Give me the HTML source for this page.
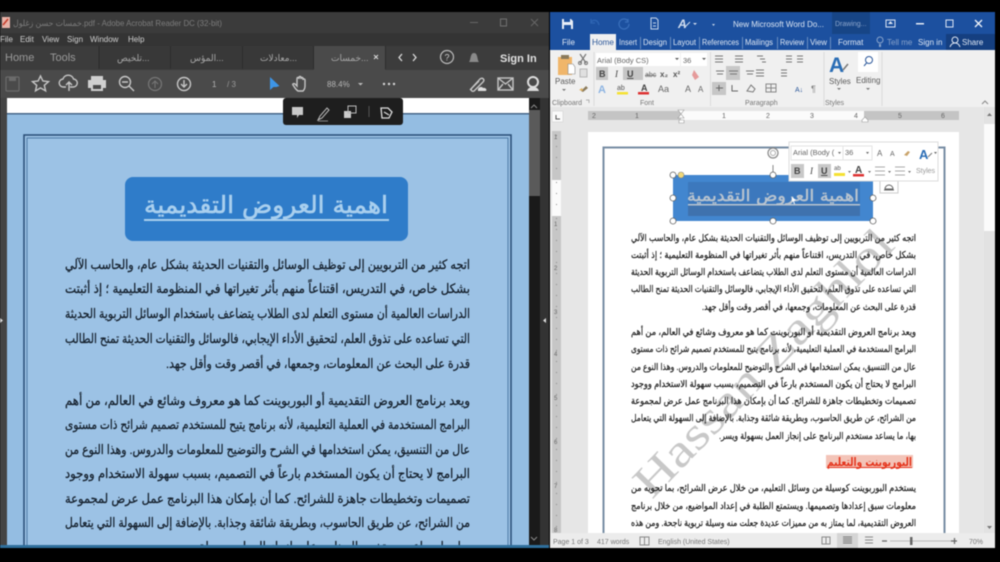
<!DOCTYPE html>
<html lang="en"><head><meta charset="utf-8"><title>Screen</title>
<style>
html,body{margin:0;padding:0;background:#000;width:1000px;height:562px;overflow:hidden}
svg{display:block;filter:blur(.4px)}
text{font-family:"Liberation Sans","DejaVu Sans",sans-serif}
.ar{font-family:"DejaVu Sans","Liberation Sans",sans-serif;direction:rtl}
.l{font-size:13px;fill:#16222f;stroke:#16222f;stroke-width:.3px}
.w{font-size:9.5px;fill:#1c1c1c;stroke:#1c1c1c;stroke-width:.22px}
.rb{font-size:8px;fill:#5a5a5a}
.tb{font-size:8px;fill:#dde6f3}
.ic{fill:none;stroke:#c6c6c6;stroke-width:1.4}
.ir{fill:none;stroke:#777;stroke-width:1}
.h{fill:#fff;stroke:#666;stroke-width:.8}
</style></head><body>
<svg width="1000" height="562" viewBox="0 0 1000 562" xmlns="http://www.w3.org/2000/svg">
<defs><clipPath id="cl"><rect x="7" y="98" width="522" height="447"/></clipPath>
<clipPath id="cr"><rect x="561" y="125" width="422" height="408"/></clipPath></defs>
<rect width="1000" height="562" fill="#000"/>

<!-- ACROBAT -->
<rect x="0" y="12" width="549" height="21" fill="#3b3b3b"/>
<rect x="2" y="17" width="8" height="11" fill="#e9b3a8"/><path d="M3 25l5-6" stroke="#c63a28" stroke-width="1.5"/>
<text x="13" y="26" font-size="8.5" fill="#7c7c7c" textLength="209" lengthAdjust="spacingAndGlyphs">خمسات حسن زغلول.pdf - Adobe Acrobat Reader DC (32-bit)</text>
<rect x="470" y="22" width="8" height="1" fill="#666"/><rect x="500.500" y="19" width="6" height="7" fill="none" stroke="#707070"/>
<path d="M531 19l7 7m0-7l-7 7" stroke="#666"/>
<rect x="0" y="33" width="549" height="13" fill="#343434"/>
<g font-size="8" fill="#cfcfcf"><text x="0" y="42">File</text><text x="20" y="42">Edit</text><text x="42" y="42">View</text><text x="67" y="42">Sign</text><text x="90" y="42">Window</text><text x="128" y="42">Help</text></g>
<rect x="0" y="46" width="549" height="24" fill="#3c3c3c"/>
<rect x="99" y="46" width="71" height="23" fill="#383838"/><rect x="171" y="46" width="71" height="23" fill="#383838"/><rect x="243" y="46" width="70" height="23" fill="#383838"/>
<rect x="314" y="46" width="71" height="25" fill="#4a4a4a"/>
<path d="M99 46v23M170.500 46v23M242.500 46v23M313.500 46v23M385.500 46v23" stroke="#2c2c2c"/>
<text x="5" y="61" font-size="11" fill="#9a9a9a">Home</text><text x="50" y="61" font-size="11" fill="#9a9a9a">Tools</text>
<g font-size="9" fill="#a8a8a8"><text x="117" y="61">تلخيص...</text><text x="190" y="61">المؤس...</text><text x="260" y="61">معادلات...</text><text x="331" y="61">خمسات...</text></g>
<path d="M374 55l4 4m0-4l-4 4" stroke="#ddd"/>
<path d="M402 54l-3 3.500 3 3.500M413 54l3 3.500-3 3.500" fill="none" stroke="#ddd" stroke-width="1.300"/>
<circle cx="447" cy="57" r="6.500" fill="none" stroke="#bbb" stroke-width="1.200"/><text x="444.500" y="60.500" font-size="9" fill="#ccc">?</text>
<path d="M469 62c2-2 1-9 5-9s3 7 5 9z" fill="#8a8a8a"/>
<text x="500" y="62" font-size="11" font-weight="bold" fill="#e2e2e2">Sign In</text>

<rect x="0" y="70" width="549" height="28" fill="#4a4a4a"/>
<rect x="6" y="77" width="13" height="14" rx="1" fill="none" stroke="#6b6b6b" stroke-width="1.200"/><rect x="9" y="77" width="7" height="4" fill="#6b6b6b"/>
<path class="ic" d="M40.500 76l2.400 5 5.600.6-4.200 3.700 1.300 5.500-5.100-2.900-5 2.900 1.200-5.500-4.200-3.700 5.600-.6z"/>
<path class="ic" d="M66 87h-2.500a4 4 0 0 1-.5-8 5.500 5.500 0 0 1 10.500 0 4 4 0 0 1-.5 8H70M69 91v-9m-3 3l3-3 3 3"/>
<path d="M91 80v-4h12v4h3v8h-3v3H91v-3h-3v-8z" fill="#d0d0d0"/><rect x="93" y="85" width="8" height="4" fill="#4a4a4a"/>
<circle cx="125" cy="82" r="5.500" class="ic"/><path class="ic" d="M129 86l5 5M122 82h6"/>
<circle cx="155" cy="84" r="6.500" fill="none" stroke="#777" stroke-width="1.200"/><path d="M155 88v-7m-3 3l3-3 3 3" fill="none" stroke="#777"/>
<circle cx="184" cy="84" r="6.500" class="ic"/><path class="ic" d="M184 80v7m-3-3l3 3 3-3"/>
<text x="212" y="87" font-size="8" fill="#b5b5b5">1</text><text x="227" y="87" font-size="8" fill="#999">/ 3</text>
<path d="M270 77v13l3.500-3 3 0 3-1z" fill="#3e95e6"/>
<path class="ic" d="M298 91c-3-2-4-5-5-6s1-2 2-1l2 2v-7c0-2 2-2 2 0v-1c0-2 2-2 2 0v1c0-2 2-2 2 0v1c0-2 2-1 2 0v6c0 3-1 4-2 5z"/>
<text x="327" y="87" font-size="8" fill="#b5b5b5">88.4%</text><path d="M358 83h5l-2.500 2.500z" fill="#bbb"/>
<g fill="#d6d6d6"><circle cx="384" cy="84" r="1.200"/><circle cx="389" cy="84" r="1.200"/><circle cx="394" cy="84" r="1.200"/></g>
<path class="ic" d="M470 90l10-11c3-2 5 1 3 3l-9 9c-2 1-4-1-2-3l7-7"/><path d="M478 91c-1-4 4-5 5-3 3-1 5 3 2 3z" fill="#ddd"/>
<rect x="498" y="78" width="15" height="12" class="ic"/><path class="ic" d="M498 78l7.500 6 7.500-6M498 90l5-6M513 90l-5-6"/>
<circle cx="533" cy="82" r="5" fill="none" stroke="#ddd" stroke-width="2"/><path d="M527 91c1-3 3-4 6-4s5 1 6 4z" fill="#ddd"/>

<rect x="0" y="98" width="7" height="447" fill="#444"/>
<rect x="529" y="98" width="20" height="447" fill="#333"/>
<rect x="529" y="98" width="11" height="447" fill="#1a1a1a"/>
<rect x="529" y="110" width="11" height="86" fill="#5a5a5a"/>
<path d="M531 108l3-3 3 3M531 537l3 3 3-3" fill="none" stroke="#888"/>
<rect x="7" y="98" width="522" height="15" fill="#fff"/>
<rect x="7" y="113" width="522" height="432" fill="#94bde2"/>
<rect x="7" y="113" width="522" height="1.500" fill="#46678a"/>
<g clip-path="url(#cl)">
<rect x="24" y="135" width="487" height="430" fill="#9cc2e5" stroke="#274b74" stroke-width="1.500"/>
<rect x="27" y="138" width="481" height="430" fill="none" stroke="#4d7aa6" stroke-width="1"/>
<rect x="125" y="177" width="283" height="64" rx="8" fill="#2f7cc9"/>
<text class="ar" x="388" y="213" font-size="24" fill="#a9cfee" stroke="#a9cfee" stroke-width=".6" textLength="244" lengthAdjust="spacingAndGlyphs">اهمية العروض التقديمية</text>
<rect x="144" y="219" width="245" height="2" fill="#a9cfee"/>
<g class="ar l">
<text x="470" y="269" textLength="405" lengthAdjust="spacingAndGlyphs">اتجه كثير من التربويين إلى توظيف الوسائل والتقنيات الحديثة بشكل عام، والحاسب الآلي</text>
<text x="470" y="293" textLength="405" lengthAdjust="spacingAndGlyphs">بشكل خاص، في التدريس، اقتناعاً منهم بأثر تغيراتها في المنظومة التعليمية ؛ إذ أثبتت</text>
<text x="470" y="318" textLength="405" lengthAdjust="spacingAndGlyphs">الدراسات العالمية أن مستوى التعلم لدى الطلاب يتضاعف باستخدام الوسائل التربوية الحديثة</text>
<text x="470" y="343" textLength="405" lengthAdjust="spacingAndGlyphs">التي تساعده على تذوق العلم، لتحقيق الأداء الإيجابي، فالوسائل والتقنيات الحديثة تمنح الطالب</text>
<text x="470" y="368" textLength="304" lengthAdjust="spacingAndGlyphs">قدرة على البحث عن المعلومات، وجمعها، في أقصر وقت وأقل جهد.</text>
<text x="470" y="405" textLength="405" lengthAdjust="spacingAndGlyphs">ويعد برنامج العروض التقديمية أو البوربوينت كما هو معروف وشائع في العالم، من أهم</text>
<text x="470" y="429" textLength="405" lengthAdjust="spacingAndGlyphs">البرامج المستخدمة في العملية التعليمية، لأنه برنامج يتيح للمستخدم تصميم شرائح ذات مستوى</text>
<text x="470" y="454" textLength="405" lengthAdjust="spacingAndGlyphs">عال من التنسيق، يمكن استخدامها في الشرح والتوضيح للمعلومات والدروس. وهذا النوع من</text>
<text x="470" y="478" textLength="405" lengthAdjust="spacingAndGlyphs">البرامج لا يحتاج أن يكون المستخدم بارعاً في التصميم، بسبب سهولة الاستخدام ووجود</text>
<text x="470" y="503" textLength="405" lengthAdjust="spacingAndGlyphs">تصميمات وتخطيطات جاهزة للشرائح. كما أن بإمكان هذا البرنامج عمل عرض لمجموعة</text>
<text x="470" y="527" textLength="405" lengthAdjust="spacingAndGlyphs">من الشرائح، عن طريق الحاسوب، وبطريقة شائقة وجذابة. بالإضافة إلى السهولة التي يتعامل</text>
<text x="470" y="551" textLength="304" lengthAdjust="spacingAndGlyphs">بها، ما يساعد مستخدم البرنامج على إنجاز العمل بسهولة ويسر.</text>
</g>
</g>
<rect x="0" y="545" width="549" height="3" fill="#2f6f9c"/>

<rect x="283" y="98" width="120" height="27" rx="3" fill="#1e1e1e"/>
<path d="M292 107h11v8h-4l-2 3v-3h-5z" fill="#c9c9c9"/>
<path d="M318 120l2-4 7-8 2 2-7 8z" fill="none" stroke="#bbb"/><path d="M318 121h10" stroke="#888"/>
<rect x="344" y="111" width="7" height="7" fill="#ccc"/><rect x="348" y="106" width="8" height="7" fill="none" stroke="#bbb"/>
<rect x="368.500" y="106" width="1" height="11" fill="#555"/>
<path d="M381 108h7l4 4-3 6h-7z" fill="none" stroke="#ddd" stroke-width="1.300"/><path d="M384 112l5 3" stroke="#ddd" stroke-width="1.300"/>
<path d="M0 318l3 2.500-3 2.500zM546 318l-3 2.500 3 2.500z" fill="#ddd"/>

<!-- WORD -->
<rect x="550" y="12" width="445" height="536" fill="#e6e6e6"/>
<rect x="550" y="12" width="445" height="38" fill="#1c509f"/>
<rect x="832" y="12" width="38" height="22" fill="#174586"/>
<rect x="946" y="34" width="49" height="16" fill="#153f80"/>
<path d="M562 19h9l2 2v8h-11z" fill="#e8eef7"/><rect x="564" y="25" width="7" height="4" fill="#1c509f"/><rect x="564" y="19" width="6" height="3" fill="#1c509f"/>
<path d="M591 22c3-3 7-2 8 3M591 19v4h4" fill="none" stroke="#2f66b4" stroke-width="1.200"/>
<path d="M628 21a5 5 0 1 0 1 3M628 19v3h-3" fill="none" stroke="#3a70bc" stroke-width="1.200"/>
<path d="M651 18h5l2 2v9h-7zM653 23h3M653 26h3" fill="none" stroke="#c8d6ea"/>
<text x="678" y="28" font-size="12" font-weight="bold" font-style="italic" fill="#d5e0f0">A</text><path d="M684 28l6-6" stroke="#d5e0f0"/><path d="M693 23h4l-2 2z" fill="#d5e0f0"/>
<path d="M712 22h3M712 24h3l-1.500 2z" fill="#c8d6ea"/>
<text x="733" y="27" font-size="8.500" fill="#dbe5f3" textLength="91" lengthAdjust="spacingAndGlyphs">New Microsoft Word Do...</text>
<text x="835" y="26" font-size="7" fill="#8ea7cd">Drawing...</text>
<rect x="886" y="20" width="9" height="7" fill="none" stroke="#dbe5f3"/><path d="M888 24l2.500-3 2.500 3z" fill="#dbe5f3"/>
<rect x="916" y="23" width="8" height="1.500" fill="#e6edf7"/>
<rect x="946" y="20" width="7" height="7" fill="none" stroke="#dbe5f3"/>
<path d="M975 20l7 7m0-7l-7 7" stroke="#f0f4fa" stroke-width="1.300"/>
<rect x="590" y="34" width="26" height="16" fill="#f0f0f0"/>
<g class="tb">
<text x="562" y="45" style="fill:#e1e9f5">File</text><text x="592" y="45" style="fill:#2b579a" textLength="22" lengthAdjust="spacingAndGlyphs">Home</text>
<text x="619" y="45" textLength="18" lengthAdjust="spacingAndGlyphs">Insert</text><text x="643" y="45" textLength="24" lengthAdjust="spacingAndGlyphs">Design</text><text x="673" y="45" textLength="23" lengthAdjust="spacingAndGlyphs">Layout</text><text x="702" y="45" textLength="37" lengthAdjust="spacingAndGlyphs">References</text><text x="745" y="45" textLength="28" lengthAdjust="spacingAndGlyphs">Mailings</text><text x="780" y="45" textLength="24" lengthAdjust="spacingAndGlyphs">Review</text><text x="810" y="45" textLength="17" lengthAdjust="spacingAndGlyphs">View</text><text x="838" y="45">Format</text>
<text x="887" y="45" style="fill:#88a3cb">Tell me</text><text x="918" y="45">Sign in</text><text x="962" y="45">Share</text></g>
<path d="M640.500 37v12M670.500 37v12M699.500 37v12M742.500 37v12M777.500 37v12M807.500 37v12M830.500 37v12" stroke="#7d9ecb" stroke-width=".8"/>
<circle cx="880" cy="40" r="3" fill="none" stroke="#88a3cb"/><path d="M879 44h2v3h-2z" fill="#88a3cb"/>
<circle cx="955" cy="40" r="3" fill="none" stroke="#e1e9f5"/><path d="M950 47c1-3 3-4 5-4s4 1 5 4" fill="none" stroke="#e1e9f5"/>

<rect x="550" y="50" width="445" height="57" fill="#f0f0f0"/>
<path d="M594 52v54M710.500 52v54M824 52v54M882 52v54" stroke="#dcdcdc" stroke-width="1"/>
<rect x="558" y="57" width="14" height="18" fill="#f0b66b"/><rect x="561" y="55" width="8" height="4" fill="#8a7a5c"/><path d="M568 64h5l2 3v7h-7z" fill="#fff" stroke="#888" stroke-width=".6"/>
<text x="555" y="84" class="rb" style="font-size:8px">Paste</text><path d="M562 89h4l-2 2z" fill="#777"/>
<path d="M580 54l6 9M586 54l-6 9" stroke="#777" stroke-width="1.200"/><circle cx="580" cy="63" r="1.500" fill="none" stroke="#777"/><circle cx="586" cy="63" r="1.500" fill="none" stroke="#777"/>
<rect x="580" y="69" width="7" height="8" fill="#e0e0e0" stroke="#aaa" stroke-width=".8"/>
<path d="M581 91l5-5 2 2-5 4z" fill="#8a7a5c"/><path d="M579 90l3-2 1 3z" fill="#e1b15a"/>
<text x="552" y="105" font-size="7" fill="#777">Clipboard</text><path d="M586 100h3v3" fill="none" stroke="#999" stroke-width=".7"/>

<rect x="596" y="53" width="84" height="13" fill="#fff"/><rect x="681" y="53" width="26" height="13" fill="#fff"/>
<text x="597" y="63" font-size="7.500" fill="#666">Arial (Body CS)</text><text x="683" y="63" font-size="7.500" fill="#666">36</text>
<path d="M675 58h4l-2 2zM702 58h4l-2 2z" fill="#555"/>
<rect x="596" y="67" width="12" height="13" fill="#c6c6c6"/><rect x="623" y="67" width="20" height="13" fill="#c6c6c6"/>
<g fill="#444" font-size="9"><text x="599" y="77" font-weight="bold">B</text><text x="615" y="77" font-style="italic" style="font-family:'Liberation Serif',serif">I</text><text x="627" y="77" text-decoration="underline" font-weight="bold">U</text></g>
<text x="645" y="77" font-size="7" fill="#666" text-decoration="line-through">abc</text><text x="660" y="77" font-size="8" fill="#555" font-weight="bold">x₂</text><text x="673" y="77" font-size="8" fill="#555" font-weight="bold">x²</text>
<path d="M694 70l5 7-4 3-3-5z" fill="#e59a9a"/>
<text x="598" y="93" font-size="11" font-weight="bold" fill="#8db4e2">A</text>
<text x="617" y="90" font-size="7" fill="#555">ab</text><rect x="617" y="92" width="11" height="2.500" fill="#f5e132"/>
<text x="641" y="91" font-size="9" font-weight="bold" fill="#444">A</text><rect x="638" y="92" width="11" height="2.500" fill="#d33"/>
<text x="658" y="92" font-size="9" fill="#666">Aa</text><text x="685" y="92" font-size="9" fill="#666">A</text><text x="698" y="92" font-size="8" fill="#666">A</text>
<text x="640" y="105" font-size="7" fill="#777">Font</text>

<g class="ir"><path d="M715 56h8M715 59h8M715 62h8M735 56h8M735 59h8M735 62h8M757 56h6M760 59h5M762 62h4M786 56h6M786 59h6M786 62h6M797 56h6M797 59h6M797 62h6"/></g>
<rect x="726" y="66" width="14" height="14" fill="#c8c8c8"/>
<rect x="712" y="82" width="14" height="13" fill="#c6c6c6"/>
<g class="ir"><path d="M716 71h8M717 74h6M729 71h9M730 74h7M746 71h8M747 74h6M756 70h8M756 73h8M756 76h8M781 70h6M781 73h6M781 76h6"/></g>
<path d="M716 88h7M719 85v6M732 85v6h6" stroke="#666" fill="none"/>
<path d="M747 91l4-6 4 4-2 3z" fill="none" stroke="#777"/><rect x="766" y="84" width="10" height="8" fill="none" stroke="#888"/><path d="M766 88h10M771 84v8" stroke="#888"/>
<text x="795" y="92" font-size="7" fill="#2b579a">A↓</text><text x="811" y="92" font-size="9" fill="#888">¶</text>
<text x="745" y="105" font-size="7" fill="#777">Paragraph</text>

<text x="829" y="72" font-size="21" fill="#2a6db5" font-weight="bold">A</text><path d="M843 70l5-6" stroke="#777" stroke-width="1.500"/>
<text x="829" y="84" class="rb" style="font-size:8px">Styles</text><path d="M837 88h4l-2 2z" fill="#777"/>
<text x="825" y="105" font-size="7" fill="#777">Styles</text>
<rect x="858" y="52" width="20" height="20" fill="#fff"/><circle cx="869" cy="60" r="3.500" fill="none" stroke="#2b579a"/><path d="M866.500 63l-2.500 3" stroke="#2b579a"/>
<text x="856" y="83" class="rb" style="font-size:8px">Editing</text><path d="M866 88h4l-2 2z" fill="#777"/>
<path d="M982 104l3-3 3 3" fill="none" stroke="#888"/>

<rect x="550" y="107" width="445" height="426" fill="#e6e6e6"/>
<rect x="552" y="111" width="11" height="11" fill="#fafafa" stroke="#ddd"/><path d="M556 115v4h4" fill="none" stroke="#555"/>
<rect x="588" y="111" width="371" height="9" fill="#c4c4c4"/>
<rect x="681" y="111" width="183" height="9" fill="#fbfbfb"/>
<g font-size="7" fill="#666"><text x="592" y="118">2</text><text x="635" y="118">1</text><text x="722" y="118">1</text><text x="766" y="118">2</text><text x="810" y="118">3</text><text x="854" y="118">4</text><text x="898" y="118">5</text><text x="941" y="118">6</text></g>
<path d="M678 110h6l-3 4 3 4h-6l3-4zM679 120h5v3h-5zM862 120l3-3 3 3v2h-6z" fill="#fff" stroke="#999" stroke-width=".6"/>
<rect x="552" y="131" width="9" height="402" fill="#c6c6c6"/>
<rect x="552" y="180" width="9" height="36" fill="#fbfbfb"/>
<path d="M556.500 135v44M556.500 182v32M556.500 218v315" stroke="#8a8a8a" stroke-width="1" stroke-dasharray="1 10"/>
<g font-size="6" fill="#666"><text x="554" y="139">1</text><text x="554" y="226">1</text><text x="554" y="270">2</text><text x="554" y="314">3</text><text x="554" y="356">4</text><text x="554" y="400">5</text><text x="554" y="444">6</text><text x="554" y="488">7</text><text x="554" y="532">8</text></g>
<rect x="984" y="107" width="11" height="426" fill="#e2e2e2"/><rect x="984" y="124" width="11" height="107" fill="#fbfbfb"/>
<path d="M987 116l2.500-3 2.500 3zM987 526l2.500 3 2.500-3z" fill="#777"/>
<rect x="588" y="132" width="371" height="410" fill="#fff"/>
<g clip-path="url(#cr)">
<rect x="603.500" y="147.500" width="341" height="400" fill="none" stroke="#778ca3" stroke-width="2"/>
<text transform="translate(652,500) rotate(-46)" font-size="46" style="font-family:'Liberation Serif',serif" fill="#c8c8c8" textLength="352" lengthAdjust="spacingAndGlyphs">Hassan Zaghlol</text>
<g class="ar w">
<text x="916" y="241" textLength="285" lengthAdjust="spacingAndGlyphs">اتجه كثير من التربويين إلى توظيف الوسائل والتقنيات الحديثة بشكل عام، والحاسب الآلي</text>
<text x="916" y="258" textLength="285" lengthAdjust="spacingAndGlyphs">بشكل خاص، في التدريس، اقتناعاً منهم بأثر تغيراتها في المنظومة التعليمية ؛ إذ أثبتت</text>
<text x="916" y="275" textLength="285" lengthAdjust="spacingAndGlyphs">الدراسات العالمية أن مستوى التعلم لدى الطلاب يتضاعف باستخدام الوسائل التربوية الحديثة</text>
<text x="916" y="292" textLength="285" lengthAdjust="spacingAndGlyphs">التي تساعده على تذوق العلم، لتحقيق الأداء الإيجابي، فالوسائل والتقنيات الحديثة تمنح الطالب</text>
<text x="916" y="310" textLength="214" lengthAdjust="spacingAndGlyphs">قدرة على البحث عن المعلومات، وجمعها، في أقصر وقت وأقل جهد.</text>
<text x="916" y="335" textLength="285" lengthAdjust="spacingAndGlyphs">ويعد برنامج العروض التقديمية أو البوربوينت كما هو معروف وشائع في العالم، من أهم</text>
<text x="916" y="352" textLength="285" lengthAdjust="spacingAndGlyphs">البرامج المستخدمة في العملية التعليمية، لأنه برنامج يتيح للمستخدم تصميم شرائح ذات مستوى</text>
<text x="916" y="370" textLength="285" lengthAdjust="spacingAndGlyphs">عال من التنسيق، يمكن استخدامها في الشرح والتوضيح للمعلومات والدروس. وهذا النوع من</text>
<text x="916" y="387" textLength="285" lengthAdjust="spacingAndGlyphs">البرامج لا يحتاج أن يكون المستخدم بارعاً في التصميم، بسبب سهولة الاستخدام ووجود</text>
<text x="916" y="404" textLength="285" lengthAdjust="spacingAndGlyphs">تصميمات وتخطيطات جاهزة للشرائح. كما أن بإمكان هذا البرنامج عمل عرض لمجموعة</text>
<text x="916" y="421" textLength="285" lengthAdjust="spacingAndGlyphs">من الشرائح، عن طريق الحاسوب، وبطريقة شائقة وجذابة. بالإضافة إلى السهولة التي يتعامل</text>
<text x="916" y="439" textLength="197" lengthAdjust="spacingAndGlyphs">بها، ما يساعد مستخدم البرنامج على إنجاز العمل بسهولة ويسر.</text>
<text x="916" y="491" textLength="285" lengthAdjust="spacingAndGlyphs">يستخدم البوربوينت كوسيلة من وسائل التعليم، من خلال عرض الشرائح، بما تحويه من</text>
<text x="916" y="509" textLength="285" lengthAdjust="spacingAndGlyphs">معلومات سبق إعدادها وتصميمها. ويستمتع الطلبة في إعداد المواضيع، من خلال برنامج</text>
<text x="916" y="526" textLength="285" lengthAdjust="spacingAndGlyphs">العروض التقديمية، لما يمتاز به من مميزات عديدة جعلت منه وسيلة تربوية ناجحة. ومن هذه</text>
</g>
<rect x="826" y="455" width="87" height="13" fill="#f3c4b8"/>
<text class="ar" x="912" y="466" font-size="12" font-weight="bold" fill="#e5341c" textLength="85" lengthAdjust="spacingAndGlyphs">البوربوينت والتعليم</text>
<rect x="827" y="467" width="85" height="1" fill="#e5341c"/>
</g>

<rect x="673" y="175" width="200" height="46" rx="3" fill="#4286cf"/>
<rect x="688" y="205" width="172" height="11" fill="#3f72ae"/>
<rect x="688" y="182" width="172" height="23" fill="#3c78bd"/>
<text class="ar" x="859" y="201" font-size="16" fill="#b9c4cf" stroke="#b9c4cf" stroke-width=".45" textLength="172" lengthAdjust="spacingAndGlyphs">اهمية العروض التقديمية</text>
<rect x="688" y="204" width="172" height="1.500" fill="#b9c4cf"/>
<path d="M773 165v9" stroke="#888"/>
<circle cx="773" cy="153" r="5" fill="none" stroke="#888" stroke-width="1.200"/><circle cx="773" cy="153" r="2.500" fill="none" stroke="#aaa"/>
<circle cx="673" cy="175" r="3" class="h"/><circle cx="773" cy="175" r="3" class="h"/>
<circle cx="681" cy="175" r="3" fill="#f0d878" stroke="#888" stroke-width=".6"/>
<circle cx="673" cy="198" r="3" class="h"/><circle cx="873" cy="198" r="3" class="h"/>
<circle cx="673" cy="221" r="3" class="h"/><circle cx="773" cy="221" r="3" class="h"/><circle cx="873" cy="221" r="3" class="h"/>
<path d="M792 197l4 3-2 1 1 3-1 0-1-3-1 1z" fill="#fff"/>
<rect x="880" y="180" width="18" height="13" fill="#fff" stroke="#ccc"/><path d="M885 189a4 4 0 0 1 8 0zM884 190h10" fill="none" stroke="#666"/>

<rect x="789" y="142" width="149" height="39" fill="#fff" stroke="#dcdcdc"/>
<rect x="791" y="146" width="62" height="14" fill="#fff" stroke="#e4e4e4"/><rect x="843" y="146" width="29" height="14" fill="#fff" stroke="#e4e4e4"/>
<text x="793" y="155" font-size="7.500" fill="#666">Arial (Body (</text><text x="845" y="155" font-size="7.500" fill="#666">36</text>
<path d="M838 152h3l-1.500 2zM866 152h3l-1.500 2z" fill="#666"/>
<text x="877" y="156" font-size="8" fill="#666">A</text><text x="890" y="156" font-size="7" fill="#666">A</text>
<path d="M904 155l4-4 2 1-3 4z" fill="#c9a36a"/><text x="919" y="159" font-size="13" fill="#2a6db5" font-weight="bold">A</text><path d="M928 157l4-4" stroke="#777"/><path d="M934 152h3l-1.500 2z" fill="#666"/>
<rect x="791" y="164" width="13" height="14" fill="#c8c8c8"/><rect x="818" y="164" width="13" height="14" fill="#c8c8c8"/>
<g fill="#444" font-size="9"><text x="794" y="174" font-weight="bold">B</text><text x="810" y="174" font-style="italic" style="font-family:'Liberation Serif',serif">I</text><text x="821" y="174" text-decoration="underline" font-weight="bold">U</text></g>
<text x="834" y="170" font-size="6" fill="#555">ab</text><rect x="834" y="173" width="11" height="3" fill="#f5e132"/>
<text x="855" y="173" font-size="10" fill="#444" font-weight="bold">A</text><rect x="853" y="174" width="11" height="2.500" fill="#d33"/>
<path d="M848 171h3l-1.500 2zM868 171h3l-1.500 2zM888 171h3l-1.500 2zM908 171h3l-1.500 2z" fill="#777"/>
<path d="M875 167h10M875 171h10M875 175h10M895 167h10M895 171h10M895 175h10" stroke="#aaa"/>
<text x="916" y="173" font-size="7" fill="#999">Styles</text>

<rect x="550" y="533" width="445" height="15" fill="#ececec"/>
<g font-size="7" fill="#777"><text x="553" y="544">Page 1 of 3</text><text x="597" y="544">417 words</text><text x="658" y="544">English (United States)</text><text x="969" y="544">70%</text></g>
<rect x="640" y="537" width="9" height="8" fill="none" stroke="#888"/><path d="M644.500 537v8" stroke="#888"/>
<rect x="837" y="533" width="21" height="15" fill="#d5d5d5"/>
<rect x="822" y="537" width="8" height="7" fill="none" stroke="#888"/><path d="M826 537v7" stroke="#888"/>
<path d="M843 537h9M843 539h9M843 541h9M843 543h9" stroke="#777"/>
<path d="M865 537h8M865 540h8M865 543h8" stroke="#888"/>
<path d="M882 541h5M957 541h-6M954.500 538v6" stroke="#666" stroke-width="1.200"/>
<path d="M890 541h61" stroke="#bbb"/><rect x="910" y="537" width="2.500" height="8" fill="#666"/>
</svg>
</body></html>
